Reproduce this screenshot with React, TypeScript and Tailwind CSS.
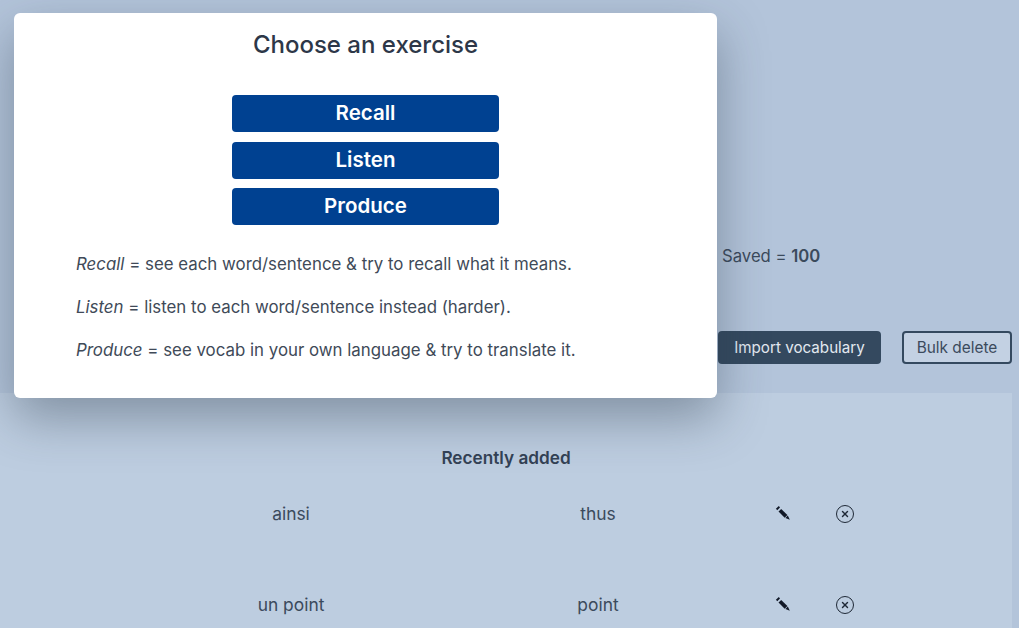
import React from 'react';
import { X } from 'lucide-react';

const font = "font-['Inter','Noto_Sans',sans-serif]";

const PenIcon = () => (
  <svg width="16" height="16" viewBox="0 0 16 16" className="text-[#111827]">
    <path d="M5 2.4 3.8.9.9 3.8l1.4 1.4z" fill="currentColor" />
    <path d="M6.2 3.9 12.4 10l-2.7 2.7-6.2-6.2z" fill="currentColor" />
    <path d="M12.8 10.6 14.8 14.8 10.4 13.1z" fill="currentColor" />
  </svg>
);

const RemoveIcon = () => (
  <div className="w-[18px] h-[18px] rounded-full border border-[#1f2937] flex items-center justify-center">
    <X size={10} strokeWidth={3.4} className="text-[#1f2937]" />
  </div>
);

const VocabRow = ({ word, meaning }: { word: string; meaning: string }) => (
  <div className="h-[91px] flex items-start pl-[191px] text-[#3b4a5c] text-[17.4px] leading-[24px]">
    <div className="w-[200px] text-center">{word}</div>
    <div className="w-[200px] ml-[107px] text-center">{meaning}</div>
    <div className="ml-[77px] w-[16px] mt-[3px]"><PenIcon /></div>
    <div className="ml-[45px] mt-[3px]"><RemoveIcon /></div>
  </div>
);

const ExerciseButton = ({ label }: { label: string }) => (
  <button className="w-[267px] h-[37px] rounded bg-[#004191] text-white font-semibold text-[20.5px]">
    {label}
  </button>
);

export default function App() {
  return (
    <div className={`${font} relative h-[628px] w-[1019px] overflow-hidden bg-[#b3c4da]`}>
      {/* page behind the modal */}
      <div className="h-[393px] pt-[244px] pl-[722px] text-[#3b4a5c] text-[16.7px] leading-[24px]">
        <div>Saved = <b className="font-semibold">100</b></div>
        <div className="mt-[63px] flex gap-[21px] -ml-[4px]">
          <button className="w-[163px] h-[33px] rounded bg-[#34495f] text-[#e2e8f0] text-[15.2px]">Import vocabulary</button>
          <button className="w-[110px] h-[33px] rounded border-2 border-[#34495f] bg-[#c3d1e3] text-[#3b4a5c] text-[15.4px]">Bulk delete</button>
        </div>
      </div>
      <div className="w-[1012px] h-[235px] bg-[#bdcde0] pt-[52px]">
        <div className="text-center text-[17.2px] leading-[26px] font-semibold text-[#334155] mb-[31px]">Recently added</div>
        <VocabRow word="ainsi" meaning="thus" />
        <VocabRow word="un point" meaning="point" />
      </div>

      {/* modal */}
      <div className="absolute left-[14px] top-[13px] w-[703px] h-[385px] bg-white rounded-md shadow-[0_20px_50px_rgba(40,55,70,0.4)] pt-[17px]">
        <h2 className="text-center text-[24px] font-medium text-[#2d3748] leading-[30px]">Choose an exercise</h2>
        <div className="mt-[35px] flex flex-col items-center gap-[9.5px]">
          <ExerciseButton label="Recall" />
          <ExerciseButton label="Listen" />
          <ExerciseButton label="Produce" />
        </div>
        <div className="mt-[27px] pl-[62px] text-[16.85px] text-[#404a58] leading-[24px] flex flex-col gap-[19px]">
          <p><i>Recall</i> = see each word/sentence &amp; try to recall what it means.</p>
          <p><i>Listen</i> = listen to each word/sentence instead (harder).</p>
          <p><i>Produce</i> = see vocab in your own language &amp; try to translate it.</p>
        </div>
      </div>
    </div>
  );
}
